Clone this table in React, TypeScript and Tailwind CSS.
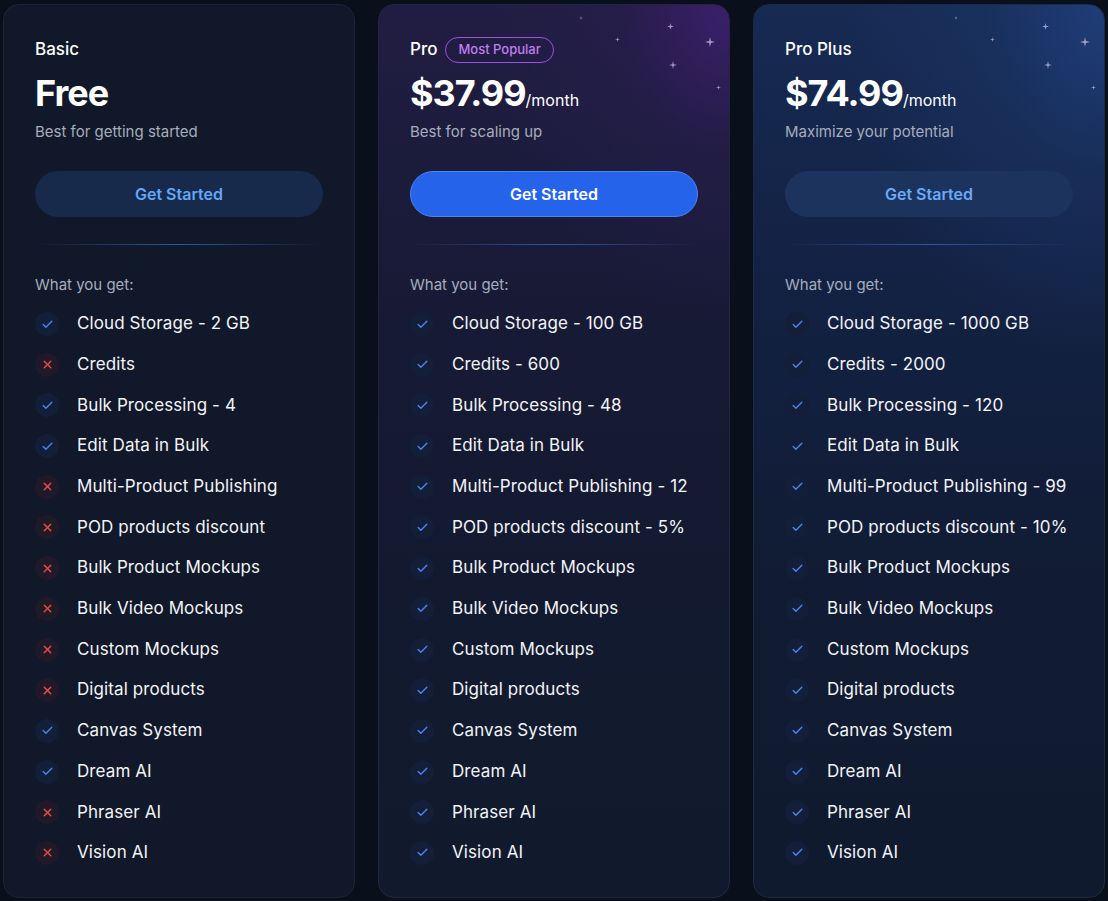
import { Check, X } from 'lucide-react'

type Feature = { label: string; on: boolean }

type Plan = {
  name: string
  price: string
  period?: string
  blurb: string
  badge?: string
  variant: 'basic' | 'pro' | 'plus'
  features: Feature[]
}

const names = [
  'Cloud Storage',
  'Credits',
  'Bulk Processing',
  'Edit Data in Bulk',
  'Multi-Product Publishing',
  'POD products discount',
  'Bulk Product Mockups',
  'Bulk Video Mockups',
  'Custom Mockups',
  'Digital products',
  'Canvas System',
  'Dream AI',
  'Phraser AI',
  'Vision AI',
]

const plans: Plan[] = [
  {
    name: 'Basic',
    price: 'Free',
    blurb: 'Best for getting started',
    variant: 'basic',
    features: [
      { label: 'Cloud Storage - 2 GB', on: true },
      { label: 'Credits', on: false },
      { label: 'Bulk Processing - 4', on: true },
      { label: 'Edit Data in Bulk', on: true },
      { label: 'Multi-Product Publishing', on: false },
      { label: 'POD products discount', on: false },
      { label: 'Bulk Product Mockups', on: false },
      { label: 'Bulk Video Mockups', on: false },
      { label: 'Custom Mockups', on: false },
      { label: 'Digital products', on: false },
      { label: 'Canvas System', on: true },
      { label: 'Dream AI', on: true },
      { label: 'Phraser AI', on: false },
      { label: 'Vision AI', on: false },
    ],
  },
  {
    name: 'Pro',
    price: '$37.99',
    period: '/month',
    blurb: 'Best for scaling up',
    badge: 'Most Popular',
    variant: 'pro',
    features: names.map((n) => ({
      label:
        n === 'Cloud Storage' ? 'Cloud Storage - 100 GB'
        : n === 'Credits' ? 'Credits - 600'
        : n === 'Bulk Processing' ? 'Bulk Processing - 48'
        : n === 'Multi-Product Publishing' ? 'Multi-Product Publishing - 12'
        : n === 'POD products discount' ? 'POD products discount - 5%'
        : n,
      on: true,
    })),
  },
  {
    name: 'Pro Plus',
    price: '$74.99',
    period: '/month',
    blurb: 'Maximize your potential',
    variant: 'plus',
    features: names.map((n) => ({
      label:
        n === 'Cloud Storage' ? 'Cloud Storage - 1000 GB'
        : n === 'Credits' ? 'Credits - 2000'
        : n === 'Bulk Processing' ? 'Bulk Processing - 120'
        : n === 'Multi-Product Publishing' ? 'Multi-Product Publishing - 99'
        : n === 'POD products discount' ? 'POD products discount - 10%'
        : n,
      on: true,
    })),
  },
]

// sparkle positions, measured from the card's top-right corner
const stars = [
  { right: 148, top: 13, size: 4 },
  { right: 112, top: 34, size: 5 },
  { right: 59, top: 21, size: 7 },
  { right: 56, top: 60, size: 8 },
  { right: 19, top: 37, size: 10 },
  { right: 11, top: 82, size: 5 },
]

function Sparkle({ size }: { size: number }) {
  return (
    <svg width={size} height={size} viewBox="0 0 10 10" className="block">
      <path d="M5 0 L5.9 4.1 L10 5 L5.9 5.9 L5 10 L4.1 5.9 L0 5 L4.1 4.1 Z" fill="#c7c3e8" opacity="0.75" />
    </svg>
  )
}

function PlanCard({ plan }: { plan: Plan }) {
  const bg =
    plan.variant === 'pro'
      ? 'bg-[radial-gradient(ellipse_70%_35%_at_100%_0%,#3b1f6b_0%,rgba(40,30,80,0.5)_45%,transparent_100%),linear-gradient(180deg,#211d42_0%,#171a35_35%,#121a2f_70%,#111a2d_100%)] border-[#242443]'
      : plan.variant === 'plus'
        ? 'bg-[radial-gradient(ellipse_75%_40%_at_100%_0%,#1f3d78_0%,rgba(27,54,105,0.5)_45%,transparent_100%),linear-gradient(180deg,#172a52_0%,#132244_30%,#111b33_65%,#101a2e_100%)] border-[#1d2a47]'
        : 'bg-[#101829] border-[#1b2438]'

  return (
    <div className={`relative overflow-hidden rounded-2xl border px-[31px] pt-[31px] pb-8 ${bg}`}>
      {plan.variant !== 'basic' && (
        <div className="pointer-events-none absolute inset-0">
          {stars.map((s, i) => (
            <div key={i} className="absolute" style={{ right: s.right - s.size / 2, top: s.top - s.size / 2 }}>
              <Sparkle size={s.size} />
            </div>
          ))}
        </div>
      )}

      <div className="relative">
        <div className="flex h-7 items-center gap-[8px]">
          <span className="text-[17px] font-medium text-white">{plan.name}</span>
          {plan.badge && (
            <span className="flex h-[26px] items-center rounded-full border border-[#9b4fe6] px-3 text-[13px] font-medium text-[#c07cf5]">
              {plan.badge}
            </span>
          )}
        </div>

        <div className="mt-[9px] flex h-10 items-baseline">
          <span className="text-[36px] font-bold leading-10 tracking-[-1px] text-white">{plan.price}</span>
          {plan.period && <span className="text-[16px] text-white">{plan.period}</span>}
        </div>

        <p className="mt-[9px] text-[15px] leading-5 text-[#a6adbd]">{plan.blurb}</p>

        {plan.variant === 'pro' ? (
          <button className="mt-[29px] h-[46px] w-full rounded-full border border-[#4b84f5] bg-[#2563eb] text-[16px] font-semibold text-white">
            Get Started
          </button>
        ) : plan.variant === 'plus' ? (
          <button className="mt-[29px] h-[46px] w-full rounded-full bg-[#1c335d] text-[16px] font-semibold text-[#6aaaf8]">
            Get Started
          </button>
        ) : (
          <button className="mt-[29px] h-[46px] w-full rounded-full bg-[#172a4c] text-[16px] font-semibold text-[#65a7f7]">
            Get Started
          </button>
        )}

        <div className="mt-[27px] h-px w-full bg-gradient-to-r from-transparent via-[#3457a3] to-transparent" />

        <p className="mt-[30px] text-[15px] leading-5 text-[#a6adbd]">What you get:</p>

        <ul className="mt-[17px] flex flex-col gap-[16.7px]">
          {plan.features.map((f) => (
            <li key={f.label} className="flex h-6 items-center gap-[18px]">
              {f.on ? (
                <span className="flex h-6 w-6 shrink-0 items-center justify-center rounded-full bg-[#131e38]">
                  <Check size={13} strokeWidth={2.5} className="text-[#4d86f0]" />
                </span>
              ) : (
                <span className="flex h-6 w-6 shrink-0 items-center justify-center rounded-full bg-[#201928]">
                  <X size={13} strokeWidth={2.5} className="text-[#ee4b4b]" />
                </span>
              )}
              <span className="text-[17px] tracking-[0.1px] text-[#f3f4f8]">{f.label}</span>
            </li>
          ))}
        </ul>
      </div>
    </div>
  )
}

export default function App() {
  return (
    <div
      className="min-h-[901px] w-[1108px] bg-[#0a0f1c] pl-[3px] pr-[3px] pt-1"
      style={{ fontFamily: 'Inter, "Noto Sans", sans-serif' }}
    >
      <div className="grid grid-cols-3 gap-[23px]">
        {plans.map((p) => (
          <PlanCard key={p.name} plan={p} />
        ))}
      </div>
    </div>
  )
}
